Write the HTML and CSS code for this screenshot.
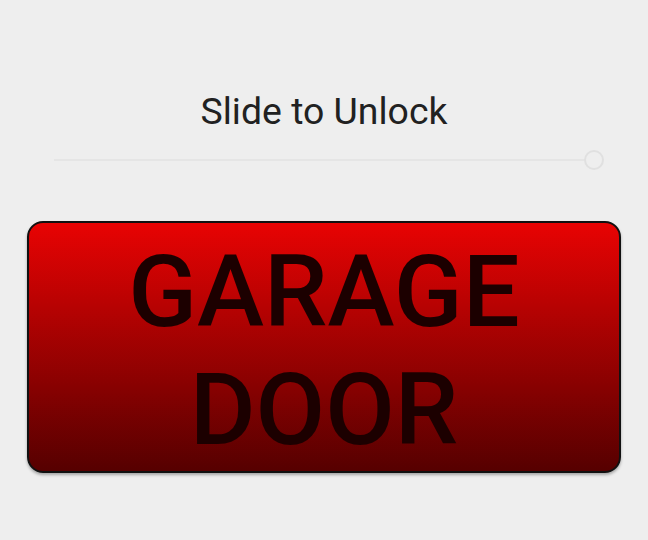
FILE: index.html
```html
<!DOCTYPE html>
<html>
<head>
<meta charset="utf-8">
<link rel="stylesheet" href="styles.css">
</head>
<body>
<div class="page">
  <h1 class="title">Slide to Unlock</h1>
  <div class="slider">
    <div class="track"></div>
    <div class="thumb"></div>
  </div>
  <div class="door-button">GARAGE<br>DOOR</div>
</div>
</body>
</html>
```
FILE: styles.css
```css
html, body {
  margin: 0;
  padding: 0;
  background: #eeeeee;
}
.page {
  width: 648px;
  height: 540px;
  padding-top: 89px;
  box-sizing: border-box;
  font-family: Roboto, "Liberation Sans", sans-serif;
}
.title {
  margin: 0;
  font-weight: 400;
  font-size: 37.4px;
  line-height: 44px;
  text-align: center;
  color: #212121;
}
.slider {
  margin: 17px 44px 0 44px;
  height: 20px;
  display: flex;
  align-items: center;
  padding-left: 10px;
}
.track {
  flex: 1;
  height: 2px;
  background: #e5e5e5;
}
.thumb {
  width: 20px;
  height: 20px;
  box-sizing: border-box;
  margin-left: -10px;
  border: 2px solid #e0e0e0;
  border-radius: 50%;
  background: #eeeeee;
}
.door-button {
  margin: 51px 27px 0 27px;
  height: 252px;
  box-sizing: border-box;
  border: 2px solid #111111;
  border-radius: 16px;
  background: linear-gradient(to bottom, #e80303, #560000);
  box-shadow: 0 2px 3px rgba(0, 0, 0, 0.3);
  padding-top: 10px;
  text-align: center;
  font-weight: 500;
  font-size: 101px;
  line-height: 118px;
  color: #1c0000;
}
```
